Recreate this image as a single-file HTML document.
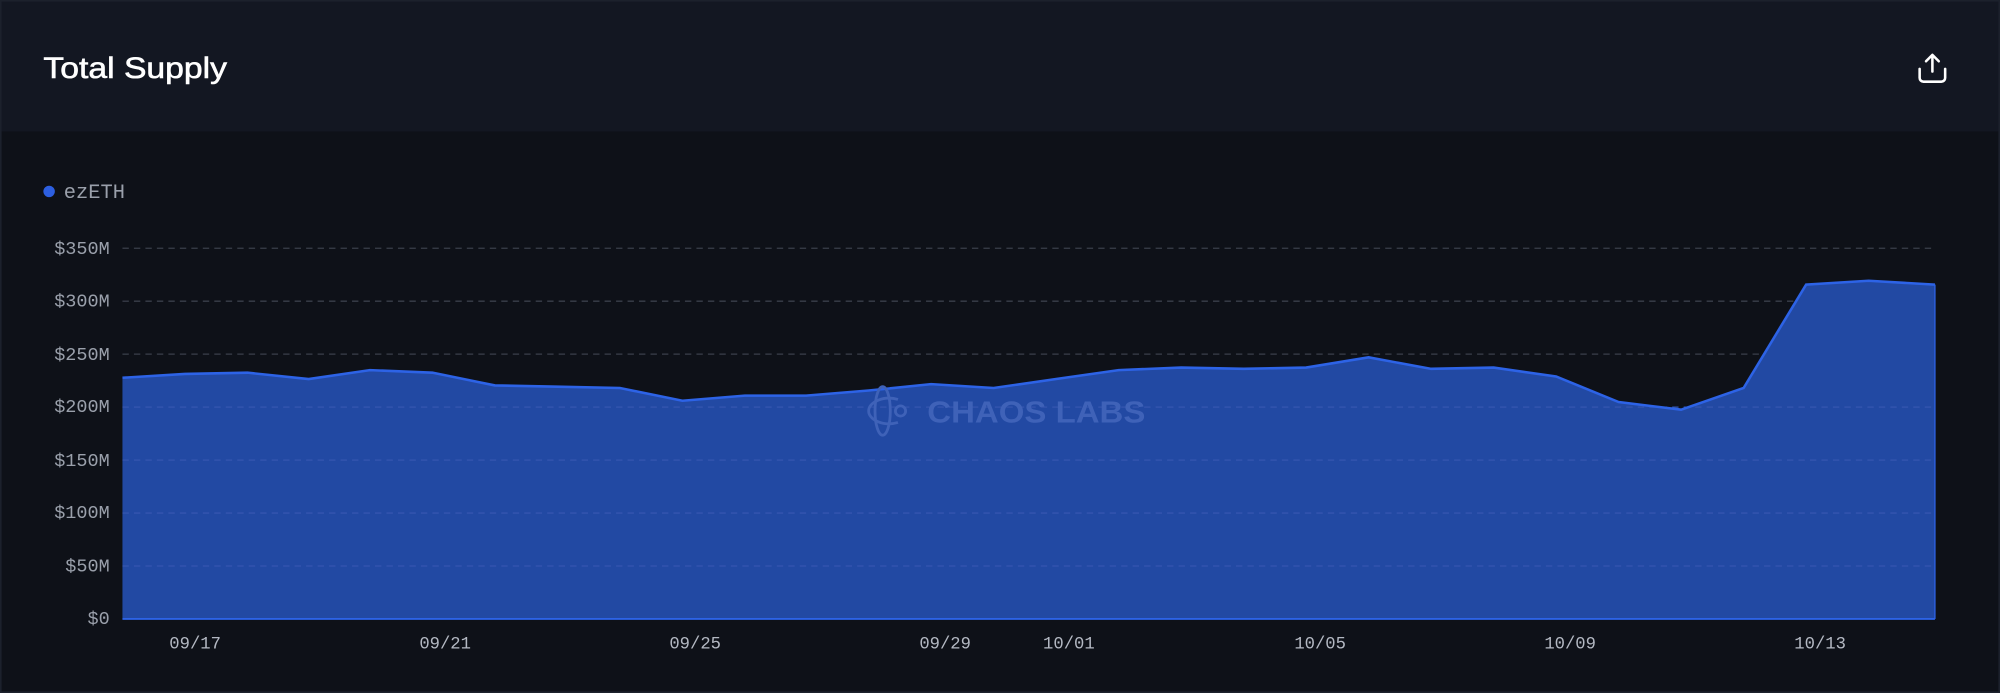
<!DOCTYPE html>
<html><head><meta charset="utf-8"><style>
html,body{margin:0;padding:0;background:#0e1118;width:2000px;height:693px;overflow:hidden}
svg{display:block}
</style></head><body>
<svg width="2000" height="693" viewBox="0 0 1568 543" preserveAspectRatio="none" xmlns="http://www.w3.org/2000/svg">
<rect x="0" y="0" width="1568" height="543" fill="#0e1118"/>
<rect x="0" y="0" width="1568" height="103" fill="#131722"/>
<rect x="0.5" y="0.5" width="1567" height="542" fill="none" stroke="#1c212c" stroke-width="1.5"/>
<text x="34" y="61" font-family="Liberation Sans, sans-serif" font-size="23" fill="#ffffff" stroke="#ffffff" stroke-width="0.45" textLength="144" lengthAdjust="spacingAndGlyphs">Total Supply</text>
<g fill="none" stroke="#ffffff" stroke-width="2" stroke-linecap="round" stroke-linejoin="round">
<path d="M1505 54 v7 a3 3 0 0 0 3 3 h14 a3 3 0 0 0 3 -3 v-7"/>
<path d="M1515 56 V43 M1510 48 l5 -5 l5 5"/>
</g>
<circle cx="38.5" cy="150" r="4.5" fill="#2d5fe0"/>
<text x="50" y="155" font-family="Liberation Mono, monospace" font-size="16" fill="#9aa0ab">ezETH</text>
<g stroke="#3a3f4a" stroke-width="1" stroke-dasharray="5 4">
<line x1="96" y1="194.5" x2="1517" y2="194.5"/>
<line x1="96" y1="236" x2="1517" y2="236"/>
<line x1="96" y1="277.5" x2="1517" y2="277.5"/>
</g>
<path d="M96,296 L145,293 L194,292 L242,297 L290,290 L339,292 L388,302 L437,303 L486,304 L535,314 L584,310 L632,310 L681,306 L730,301 L779,304 L828,297 L877,290 L926,288 L975,289 L1024,288 L1073,280 L1122,289 L1171,288 L1220,295 L1269,315 L1318,321 L1367,304 L1416,223 L1465,220 L1517,223 L1517,485 L96,485 Z" fill="#2249a3"/>
<g stroke="#3556b0" stroke-width="1" stroke-dasharray="5 4">
<line x1="96" y1="319" x2="1517" y2="319"/>
<line x1="96" y1="360.5" x2="1517" y2="360.5"/>
<line x1="96" y1="402" x2="1517" y2="402"/>
<line x1="96" y1="443.5" x2="1517" y2="443.5"/>
</g>
<path d="M96,296 L145,293 L194,292 L242,297 L290,290 L339,292 L388,302 L437,303 L486,304 L535,314 L584,310 L632,310 L681,306 L730,301 L779,304 L828,297 L877,290 L926,288 L975,289 L1024,288 L1073,280 L1122,289 L1171,288 L1220,295 L1269,315 L1318,321 L1367,304 L1416,223 L1465,220 L1517,223" fill="none" stroke="#2d63e6" stroke-width="2"/>
<line x1="96" y1="485" x2="1517" y2="485" stroke="#2d63e6" stroke-width="1.5"/>
<line x1="1517" y1="223" x2="1517" y2="485" stroke="#2d63e6" stroke-width="1"/>
<g fill="none" stroke="#3f62b8" stroke-width="2.2">
<ellipse cx="692" cy="322" rx="6" ry="19"/>
<path d="M704,313 A16 10 0 1 0 704 331"/>
<circle cx="706" cy="322" r="4"/>
</g>
<text x="727" y="331" font-family="Liberation Sans, sans-serif" font-weight="bold" font-size="24" fill="#3f62b8" textLength="171" lengthAdjust="spacingAndGlyphs">CHAOS LABS</text>
<g font-family="Liberation Mono, monospace" font-size="14.5" fill="#9aa0ab" text-anchor="end">
<text x="86" y="199">$350M</text>
<text x="86" y="240">$300M</text>
<text x="86" y="282">$250M</text>
<text x="86" y="323">$200M</text>
<text x="86" y="365">$150M</text>
<text x="86" y="406">$100M</text>
<text x="86" y="448">$50M</text>
<text x="86" y="489">$0</text>
</g>
<g font-family="Liberation Mono, monospace" font-size="13.5" fill="#b4b9c3" text-anchor="middle">
<text x="153" y="508">09/17</text>
<text x="349" y="508">09/21</text>
<text x="545" y="508">09/25</text>
<text x="741" y="508">09/29</text>
<text x="838" y="508">10/01</text>
<text x="1035" y="508">10/05</text>
<text x="1231" y="508">10/09</text>
<text x="1427" y="508">10/13</text>
</g>
</svg>
</body></html>
